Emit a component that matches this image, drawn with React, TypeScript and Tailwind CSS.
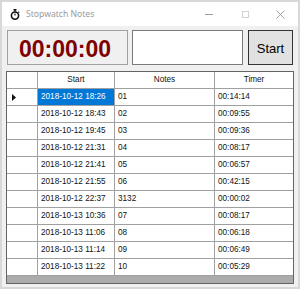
import React from "react";

const ROWS = [
  { start: "2018-10-12 18:26", note: "01", timer: "00:14:14" },
  { start: "2018-10-12 18:43", note: "02", timer: "00:09:55" },
  { start: "2018-10-12 19:45", note: "03", timer: "00:09:36" },
  { start: "2018-10-12 21:31", note: "04", timer: "00:08:17" },
  { start: "2018-10-12 21:41", note: "05", timer: "00:06:57" },
  { start: "2018-10-12 21:55", note: "06", timer: "00:42:15" },
  { start: "2018-10-12 22:37", note: "3132", timer: "00:00:02" },
  { start: "2018-10-13 10:36", note: "07", timer: "00:08:17" },
  { start: "2018-10-13 11:06", note: "08", timer: "00:06:18" },
  { start: "2018-10-13 11:14", note: "09", timer: "00:06:49" },
  { start: "2018-10-13 11:22", note: "10", timer: "00:05:29" },
];

const COLS = "grid grid-cols-[31px_77px_100px_78px]";

function StopwatchIcon() {
  return (
    <svg width="10" height="11" viewBox="0 0 10 11">
      <rect x="3.5" y="0" width="3" height="1.5" fill="#111" />
      <rect x="4.3" y="1" width="1.4" height="1.6" fill="#111" />
      <circle cx="5" cy="6.6" r="3.6" fill="#fff" stroke="#111" strokeWidth="1.6" />
      <path d="M5 6.6 L5 4.4" stroke="#111" strokeWidth="1.1" />
      <path d="M8.2 2.6 L9.2 3.6" stroke="#111" strokeWidth="1.1" />
    </svg>
  );
}

export default function App() {
  return (
    <div className="w-[300px] h-[289px] border-2 border-[#d8d8d8] bg-[#f0f0f0] flex flex-col overflow-hidden font-['Liberation_Sans',Arial,sans-serif]">
      {/* title bar */}
      <div className="h-[24px] shrink-0 bg-white flex items-center">
        <div className="w-[10px] ml-[8px] flex items-center">
          <StopwatchIcon />
        </div>
        <span className="ml-[6px] text-[8.6px] text-[#9a9a9a] font-['Noto_Sans',sans-serif] leading-none">Stopwatch Notes</span>
        <div className="ml-auto flex items-center h-full">
          <div className="w-[35px] h-full flex items-center justify-center">
            <div className="w-[8px] h-px bg-[#9a9a9a] -ml-[3px]" />
          </div>
          <div className="w-[35px] h-full flex items-center justify-center">
            <div className="w-[7px] h-[7px] border border-[#d2d2d2]" />
          </div>
          <div className="w-[35px] h-full flex items-center justify-center">
            <svg width="9" height="9" viewBox="0 0 9 9">
              <path d="M0.5 0.5 L8.5 8.5 M8.5 0.5 L0.5 8.5" stroke="#9a9a9a" strokeWidth="0.9" />
            </svg>
          </div>
        </div>
      </div>

      {/* client */}
      <div className="flex-1 flex flex-col pt-[4px]">
        <div className="flex h-[35px] pl-[5px] pr-[5px] gap-[4px]">
          <div className="w-[121px] h-full border border-[#a0a0a0] bg-[#f0f0f0] flex items-center justify-center">
            <span className="text-[23px] font-bold text-[#800000] leading-none mt-[3px] -ml-[5px]">00:00:00</span>
          </div>
          <div className="w-[111px] h-full border border-[#7a7a7a] bg-white" />
          <div className="w-[45px] h-full ml-[1px] border border-[#333] bg-[#e1e1e1] flex items-center justify-center">
            <span className="text-[13px] text-black leading-none mt-[2px]">Start</span>
          </div>
        </div>

        {/* grid */}
        <div className="ml-[4px] mt-[6px] w-[288px] h-[213px] border border-[#646464] bg-[#ababab] flex flex-col text-[8.2px] text-[#111]">
          <div className={`${COLS} h-[17px] bg-white`}>
            <div className="border-r border-b border-[#a0a0a0]" />
            <div className="border-r border-b border-[#a0a0a0] flex items-center justify-center">Start</div>
            <div className="border-r border-b border-[#a0a0a0] flex items-center justify-center">Notes</div>
            <div className="border-b border-[#a0a0a0] flex items-center justify-center">Timer</div>
          </div>
          {ROWS.map((r, i) => (
            <div key={i} className={`${COLS} h-[17px] bg-white`}>
              <div className="border-r border-b border-[#a0a0a0] flex items-center pl-[5px]">
                {i === 0 && (
                  <svg width="4" height="7" viewBox="0 0 4 7">
                    <path d="M0 0 L4 3.5 L0 7 Z" fill="#111" />
                  </svg>
                )}
              </div>
              <div className={`border-r border-b border-[#a0a0a0] flex items-center pl-[3px] ${i === 0 ? "bg-[#0078d7] text-white" : ""}`}>
                {r.start}
              </div>
              <div className="border-r border-b border-[#a0a0a0] flex items-center pl-[3px]">{r.note}</div>
              <div className="border-b border-[#a0a0a0] flex items-center pl-[3px]">{r.timer}</div>
            </div>
          ))}
        </div>
      </div>
    </div>
  );
}
